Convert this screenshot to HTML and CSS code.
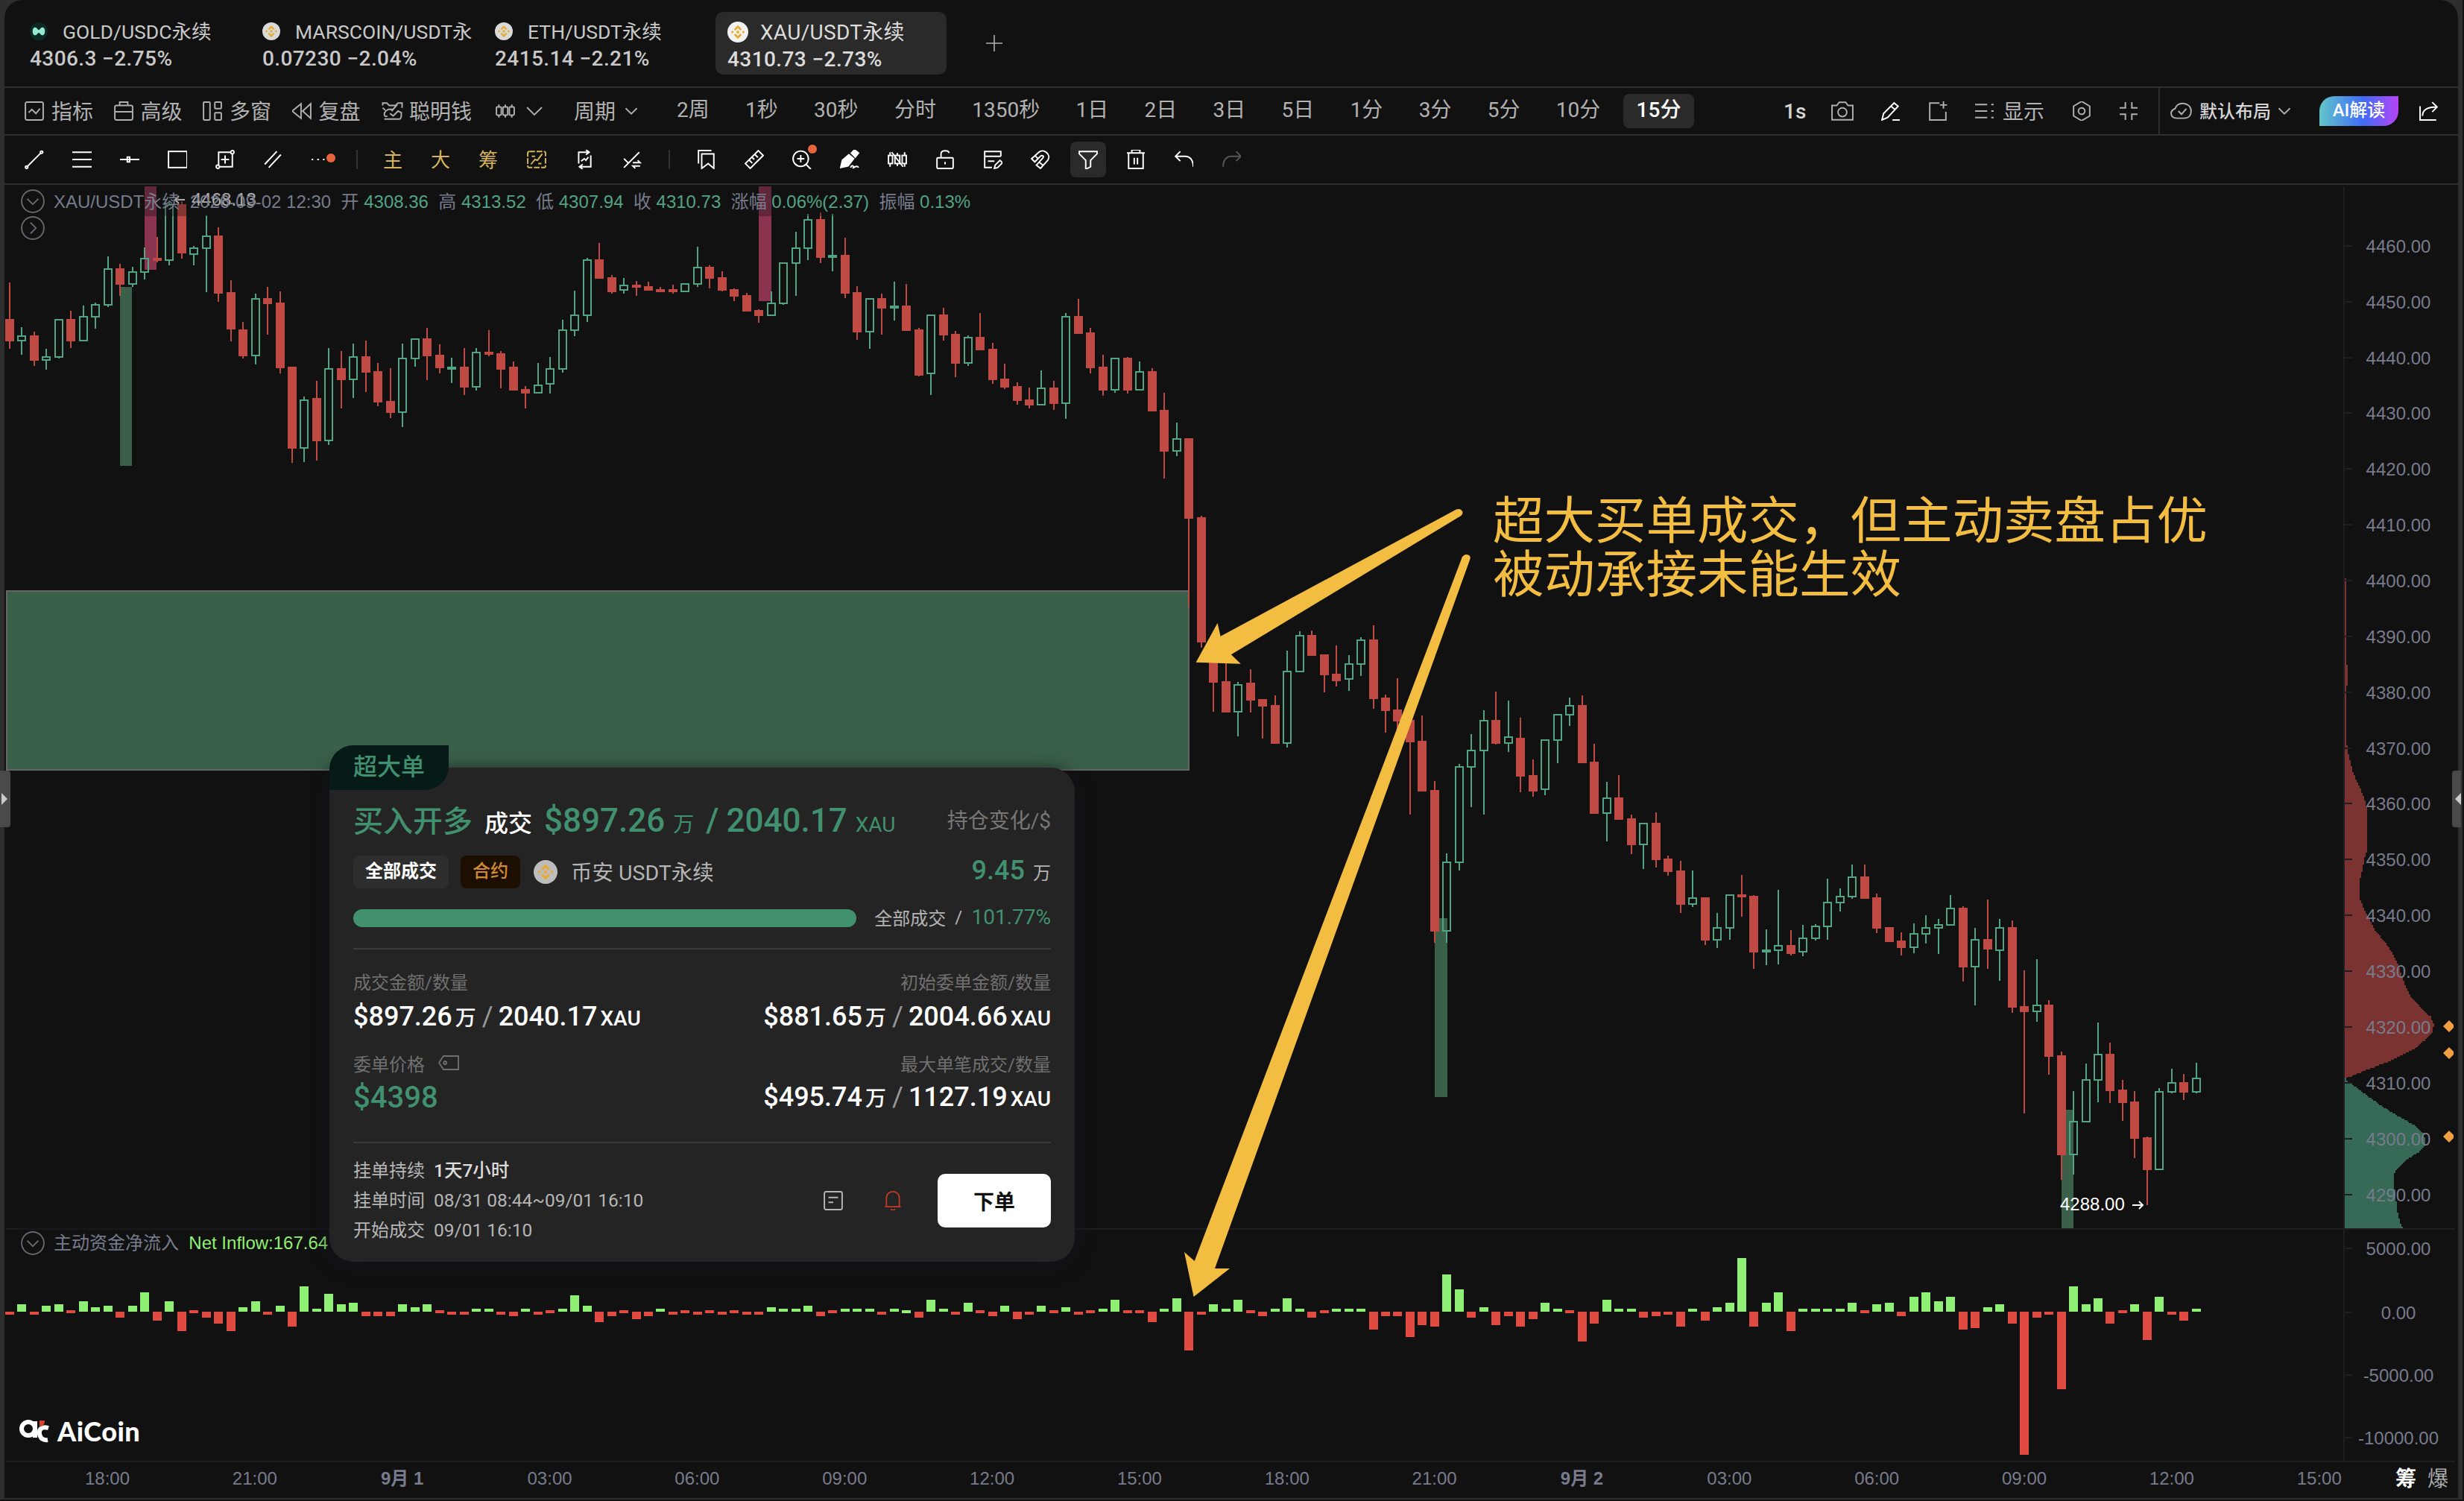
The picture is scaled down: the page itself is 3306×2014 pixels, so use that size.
FILE: index.html
```html
<!DOCTYPE html>
<html lang="zh-CN">
<head>
  <meta charset="UTF-8" />
  <title>XAU/USDT永续 - AiCoin</title>
  <link rel="stylesheet" href="styles.css">
</head>
<body>
  <!-- shared logos -->
  <svg class="defs" width="0" height="0">
    <symbol id="bnb" viewBox="0 0 32 32">
      <circle cx="16" cy="16" r="16" fill="currentColor" />
      <g fill="#e9ac33">
        <path d="M16 5.5l6 6-2.3 2.3L16 10.1l-3.7 3.7L10 11.5zM16 26.5l6-6-2.3-2.3-3.7 3.7-3.7-3.7L10 20.5zM16 13.2l2.8 2.8-2.8 2.8-2.8-2.8zM7.6 13.7L9.9 16l-2.3 2.3L5.3 16zM24.4 13.7l2.3 2.3-2.3 2.3-2.3-2.3z" />
      </g>
    </symbol>
    <symbol id="chev" viewBox="0 0 24 24"><path d="M2 7l10 10L22 7" /></symbol>
  </svg>

  <div class="window">
    <div class="app">
      <header class="tabs">
        <div class="tab">
          <div class="tab-name">
            <svg class="coin" viewBox="0 0 32 32"><circle cx="16" cy="16" r="16" fill="#0c2a24" /><path d="M5 16c0-5 2-7 4.500-7 3.500 0 4 4.500 6.500 4.500S19 9 22.500 9c2.500 0 4.500 2 4.500 7s-2 7-4.500 7c-3.500 0-4-4.500-6.500-4.500S13 23 9.500 23C7 23 5 21 5 16z" fill="#97e8d3" /></svg>
            <span>GOLD/USDC永续</span>
          </div>
          <div class="tab-price">4306.3 −2.75%</div>
        </div>
        <div class="tab">
          <div class="tab-name"><svg class="coin"><use href="#bnb" /></svg><span>MARSCOIN/USDT永</span></div>
          <div class="tab-price">0.07230 −2.04%</div>
        </div>
        <div class="tab">
          <div class="tab-name"><svg class="coin"><use href="#bnb" /></svg><span>ETH/USDT永续</span></div>
          <div class="tab-price">2415.14 −2.21%</div>
        </div>
        <div class="tab active">
          <div class="tab-name"><svg class="coin"><use href="#bnb" /></svg><span>XAU/USDT永续</span></div>
          <div class="tab-price">4310.73 −2.73%</div>
        </div>
        <svg class="add" viewBox="0 0 24 24"><path d="M12 1v22M1 12h22" /></svg>
      </header>

      <nav class="toolbar">
        <div class="tools">
          <span class="tool"><svg class="icon" viewBox="0 0 24 24"><rect x="1" y="1" width="22" height="22" rx="2" /><path d="M5 14l4-4 5 5 5-6" /></svg><b>指标</b></span>
          <span class="tool"><svg class="icon" viewBox="0 0 24 24"><rect x="1" y="5" width="22" height="18" rx="2" /><path d="M7 5V1h10v4M1 13h22" /></svg><b>高级</b></span>
          <span class="tool"><svg class="icon" viewBox="0 0 24 24"><rect x="1" y="1" width="8" height="22" rx="1" /><rect x="15" y="1" width="8" height="8" rx="1" /><rect x="15" y="14" width="8" height="9" rx="1" /></svg><b>多窗</b></span>
          <span class="tool"><svg class="icon" viewBox="0 0 24 24"><path d="M11 3v18L0 12zM23 3v18l-10-9z" /></svg><b>复盘</b></span>
          <span class="tool smart"><svg class="icon" viewBox="0 0 28 24"><path d="M2 5V2h5l3 3h8l3-3h5v6M2 8l3 3M8 18c-6 3-5-6 1-8h6M4 22h18c3 0 3-3 3-5v-3l-4-2-6 6-4-3M20 4l-7 8" /></svg><b>聪明钱</b></span>
          <span class="tool kline"><svg class="icon" viewBox="0 0 24 24"><path d="M4 4v3M4 17v3M12 4v3M12 17v3M20 4v3M20 17v3" /><rect x="1" y="7" width="6" height="10" rx="1" /><rect x="9" y="7" width="6" height="10" rx="1" /><rect x="17" y="7" width="6" height="10" rx="1" /></svg><svg class="icon chev"><use href="#chev" /></svg></span>
          <span class="tool cycle"><b>周期</b><svg class="icon chev small"><use href="#chev" /></svg></span>
        </div>
        <div class="periods">
          <span>2周</span><span>1秒</span><span>30秒</span><span>分时</span><span>1350秒</span><span>1日</span><span>2日</span><span>3日</span><span>5日</span><span>1分</span><span>3分</span><span>5分</span><span>10分</span><span class="active">15分</span>
        </div>
        <div class="actions">
          <span class="sec">1s</span>
          <svg class="icon cam" viewBox="0 0 28 24"><path d="M1 5h6l3-4h8l3 4h6v18H1z" /><circle cx="14" cy="13.500" r="5.500" /></svg>
          <svg class="icon white" viewBox="0 0 24 24"><path d="M1 23l2-8L16 2l5 4L8 20zM12 6l5 4M14 23h9" /></svg>
          <svg class="icon" viewBox="0 0 24 24"><path d="M14 2H2v21h20V13M19 0v9M14.500 4.500h9" /></svg>
          <span class="show"><svg class="icon" viewBox="0 0 24 24"><path d="M0 4h15M0 12h15M0 20h15M20 4h3M20 12h3M20 20h3" /></svg><b>显示</b></span>
          <svg class="icon" viewBox="0 0 24 24"><path d="M12 0l10 6v12l-10 6-10-6V6z" /><circle cx="12" cy="12" r="4" /></svg>
          <svg class="icon" viewBox="0 0 24 24"><path d="M8 1v7H1M16 1v7h7M8 23v-7H1M16 23v-7h7" /></svg>
        </div>
        <div class="layout">
          <svg class="icon cloud" viewBox="0 0 28 24"><path d="M8 21C3 21 1 18 1 15c0-3 2-5 5-6 1-4 5-7 10-6.500 6 .5 10 4 10 9.500 0 6-4 9-9 9zM10 12l4 4 6-7" /></svg>
          <b>默认布局</b>
          <svg class="icon chev small"><use href="#chev" /></svg>
          <span class="ai">AI解读</span>
          <svg class="icon white" viewBox="0 0 24 24"><path d="M1 6v17h20M4 18c0-7 5-11 18-11M16 1l6 6-6 6" /></svg>
        </div>
      </nav>

      <nav class="draw">
        <i><svg class="icon" viewBox="0 0 24 24"><path d="M3 21L20 4" /><circle cx="2.500" cy="21.500" r="1.500" /><circle cx="21" cy="3" r="1.500" /></svg></i>
        <i><svg class="icon" viewBox="0 0 24 24"><path d="M0 3h24M0 12h24M0 21h24" /></svg></i>
        <i><svg class="icon" viewBox="0 0 24 24"><path d="M0 12h24M9 9v6h3V9z" /></svg></i>
        <i><svg class="icon" viewBox="0 0 24 24"><rect x="1" y="2" width="23" height="20" /></svg></i>
        <i><svg class="icon" viewBox="0 0 24 24"><path d="M19 3H4v16M5 21h16V5M12 7v10M7 12h10" /><circle cx="21" cy="3" r="2" /><circle cx="3" cy="21" r="2" /></svg></i>
        <i><svg class="icon" viewBox="0 0 24 24"><path d="M2 18L17 2M7 22L22 6" /></svg></i>
        <i class="more"><svg class="icon" viewBox="0 0 24 24"><path d="M1 12h2M8 12h2M15 12h2" /></svg><b class="dot"></b></i>
        <hr>
        <i class="gold"><b>主</b></i>
        <i class="gold"><b>大</b></i>
        <i class="gold"><b>筹</b></i>
        <i class="gold"><svg class="icon" viewBox="0 0 24 24"><rect x="1" y="2" width="22" height="20" rx="2" stroke-dasharray="7 2" /><path d="M5 18l5-6 3 1 6-8M6 8h4M14 17h4" /></svg></i>
        <i><svg class="icon" viewBox="0 0 24 24"><path d="M5 17V3h13M14 0l4 3-4 3M20 7v14H6M10 24l-4-3 4-3M8 14l4-3 2 2 3-4" /></svg></i>
        <i><svg class="icon" viewBox="0 0 24 24"><path d="M2 22L21 3M2 11l6 6M13 16h9l-3-3M22 20h-9l3 3" /></svg></i>
        <hr class="wide">
        <i><svg class="icon" viewBox="0 0 24 24"><path d="M2 17V1h16M6 5h15v18l-7-6-8 6z" /></svg></i>
        <i><svg class="icon" viewBox="0 0 24 24"><path d="M1 17L17 1l6 6L7 23zM9 9l3 3M12.500 5.500l4 4M5.500 12.500l4 4" /></svg></i>
        <i class="more"><svg class="icon" viewBox="0 0 24 24"><circle cx="10.500" cy="11" r="9.500" /><path d="M17 18l6 6M6 11h9M10.500 6.500v9" /></svg><b class="dot up"></b></i>
        <i><svg class="icon" viewBox="0 0 24 24"><path d="M1 22l2-9 8-7 6 5-7 9zM14 4l4-4 5 4-4 5z" class="solid" /><path d="M13 22c2-4 5-2 3 1 3-3 6-3 7-1" /></svg></i>
        <i><svg class="icon" viewBox="0 0 24 24"><path d="M3 3v4M3 17v4M12 4v3M12 17v3M21 3v4M21 17v4M5 3l14 18" /><rect x="1" y="7" width="5" height="10" /><rect x="9" y="7" width="6" height="10" /><rect x="18" y="7" width="5" height="10" /></svg></i>
        <i><svg class="icon" viewBox="0 0 24 24"><rect x="2" y="10" width="20" height="13" rx="1" /><path d="M7 10V5c0-5 9-5 10-1M12 15v3" /></svg></i>
        <i><svg class="icon" viewBox="0 0 24 24"><path d="M22 8V2H2v20h9M2 8h20M6 14h8M14 23l1-4 6-6 3 3-6 6z" /></svg></i>
        <i><svg class="icon" viewBox="0 0 24 24"><path d="M1 11L10 3c6-5 16 3 11 10L12 23l-5-4 8-9c2-2-1-4-3-2l-7 7zM5 7l4 4M10 15l5 4" /></svg></i>
        <i class="on"><svg class="icon" viewBox="0 0 24 24"><path d="M1 2h22v3l-8 8v8l-6 3V13L1 5z" /></svg></i>
        <i><svg class="icon" viewBox="0 0 24 24"><path d="M1 4h22M3 4v19h18V4M7 4V0h10v4M10 10v8M14 10v8" /></svg></i>
        <i><svg class="icon" viewBox="0 0 24 24"><path d="M8 2L2 8l6 6M2 8h12c6 0 10 5 10 13" /></svg></i>
        <i class="off"><svg class="icon" viewBox="0 0 24 24"><path d="M18 2l6 6-6 6M24 8H12C6 8 2 13 2 21" /></svg></i>
      </nav>

      <main class="chart">
        <svg id="plot" viewBox="6 248 3292 1762" width="3292" height="1762"></svg>

        <div class="legend">
          <svg class="fold" viewBox="0 0 30 30"><circle cx="15" cy="15" r="14" /><path d="M8 12l7 7 7-7" /></svg>
          <div class="legend-text">XAU/USDT永续  2026-09-02 12:30  开 <b>4308.36</b>  高 <b>4313.52</b>  低 <b>4307.94</b>  收 <b>4310.73</b>  涨幅 <b>0.06%(2.37)</b>  振幅 <b>0.13%</b></div>
        </div>
        <svg class="fold fold-more" viewBox="0 0 30 30"><circle cx="15" cy="15" r="14" /><path d="M12 8l7 7-7 7" /></svg>

        <div class="legend flow">
          <svg class="fold" viewBox="0 0 30 30"><circle cx="15" cy="15" r="14" /><path d="M8 12l7 7 7-7" /></svg>
          <div class="legend-text">主动资金净流入  <b>Net Inflow:167.64</b></div>
        </div>

        <div class="brand">
          <svg viewBox="0 0 40 32"><g fill="none" stroke="#fff" stroke-width="6"><circle cx="12" cy="13" r="9" /><path d="M21 3v22" /><path d="M39 12c-10-3-13 3-12 8 1 6 5 9 11 8" /></g><path d="M27 2h7c0 5-2 8-7 8z" fill="#d8422c" /></svg>
          <span>AiCoin</span>
        </div>

        <div class="modes"><span class="on">筹</span><span>爆</span></div>
        <div class="note">超大买单成交，但主动卖盘占优<br>被动承接未能生效</div>

        <section class="card">
          <div class="badge">超大单</div>
          <div class="row head">
            <div class="deal"><span class="side">买入开多</span><span class="done">成交</span><span class="sum">$897.26</span><span class="unit">万</span><span class="sum sl">/</span><span class="sum">2040.17</span><span class="unit">XAU</span></div>
            <span class="dim28">持仓变化/$</span>
          </div>
          <div class="row meta">
            <div class="chips"><span class="chip">全部成交</span><span class="chip orange">合约</span><svg class="ex"><use href="#bnb" /></svg><span class="ex-name">币安 USDT永续</span></div>
            <div class="change">9.45<small>万</small></div>
          </div>
          <div class="row fill">
            <div class="track"></div>
            <span class="state">全部成交</span><span class="slash">/</span><span class="pct">101.77%</span>
          </div>
          <hr>
          <div class="row labels"><span>成交金额/数量</span><span>初始委单金额/数量</span></div>
          <div class="row values">
            <div>$897.26<small>万</small><em>/</em>2040.17<small>XAU</small></div>
            <div>$881.65<small>万</small><em>/</em>2004.66<small>XAU</small></div>
          </div>
          <div class="row labels second">
            <span class="price-label">委单价格<svg viewBox="0 0 28 20"><path d="M7 1h20v18H7L1 10z" /><circle cx="9" cy="10" r="2" /></svg></span>
            <span>最大单笔成交/数量</span>
          </div>
          <div class="row values">
            <div class="price">$4398</div>
            <div>$495.74<small>万</small><em>/</em>1127.19<small>XAU</small></div>
          </div>
          <hr class="bottom">
          <div class="row foot">
            <div class="times">
              <div><span>挂单持续</span><b>1天7小时</b></div>
              <div><span>挂单时间</span>08/31 08:44~09/01 16:10</div>
              <div><span>开始成交</span>09/01 16:10</div>
            </div>
            <div class="btns">
              <svg class="doc" viewBox="0 0 24 24"><rect x="1" y="1" width="22" height="22" rx="2" /><path d="M6 8h12M6 14h6" /></svg>
              <svg class="bell" viewBox="0 0 24 27"><path d="M1 22h22M3 22V10c0-12 18-12 18 0v12M9 25c1 2 5 2 6 0" /></svg>
              <button>下单</button>
            </div>
          </div>
        </section>
      </main>
    </div>
    <div class="handle left"></div>
    <div class="handle right"></div>
  </div>

  <script src="chart.js"></script>
</body>
</html>
```
FILE: styles.css
```css
* {
  box-sizing: border-box;
}

body {
  margin: 0;
  background: #111;
  color: #c8c8c8;
  font-family: Roboto, "Noto Sans CJK SC", sans-serif;
  font-size: 28px;
  overflow: hidden;
}

.defs {
  position: absolute;
}

.window {
  position: relative;
  width: 3304px;
  height: 2012px;
  padding: 0 6px 2px;
  background: #2e2e2e;
}

.app {
  height: 2010px;
  background: #111;
  border-radius: 24px 24px 0 0;
  overflow: hidden;
}

.icon {
  width: 26px;
  height: 26px;
  fill: none;
  stroke: #b0b0b0;
  stroke-width: 1.8;
  flex: none;
}

.icon.white {
  stroke: #fff;
}

.icon.chev {
  width: 24px;
  height: 24px;
}

.icon.chev.small {
  width: 18px;
  height: 18px;
  stroke-width: 2.4;
}

/* symbol tabs */
.tabs {
  display: flex;
  align-items: flex-start;
  gap: 2px;
  height: 118px;
  padding: 16px 18px;
  border-bottom: 2px solid #2e2e2e;
}

.tab {
  width: 310px;
  height: 84px;
  padding: 7px 16px;
  border-radius: 10px;
}

.tab.active {
  background: #2a2a2a;
  color: #dcdcdc;
  padding-top: 8px;
}

.tab.active .coin {
  width: 28px;
  height: 28px;
  color: #f2f2f2;
}

.tab-name {
  display: flex;
  align-items: center;
  gap: 20px;
  height: 38px;
  font-size: 26.5px;
  white-space: nowrap;
}

.tab-name span {
  padding-bottom: 4px;
}

.tab.active .tab-name {
  gap: 16px;
  font-size: 28px;
  letter-spacing: 0.3px;
}

.coin {
  width: 24px;
  height: 24px;
  color: #dadada;
  flex: none;
}

.tab-price {
  height: 34px;
  line-height: 36px;
  font-weight: 500;
  letter-spacing: 0.4px;
}

.add {
  width: 24px;
  height: 24px;
  margin: 30px 0 0 50px;
  stroke: #b0b0b0;
  stroke-width: 1.6;
}

/* main toolbar */
.toolbar {
  display: flex;
  align-items: center;
  height: 64px;
  border-bottom: 2px solid #2e2e2e;
  color: #b2b2b2;
}

.toolbar b {
  padding-bottom: 3px;
  font-weight: inherit;
}

.tools {
  display: flex;
  align-items: center;
  width: 884px;
  padding-left: 27px;
  gap: 27.500px;
}

.tool {
  display: flex;
  align-items: center;
  gap: 10px;
  height: 40px;
}

.tool.smart {
  gap: 7px;
}

.tool.smart .icon {
  width: 31px;
}

.tool.kline {
  gap: 13px;
  margin-left: 3px;
}

.tool.kline .icon:first-child {
  width: 28px;
}

.tool.cycle {
  margin-left: 14px;
  gap: 12px;
}

.periods {
  display: flex;
  gap: 12.300px;
}

.periods span {
  height: 46px;
  line-height: 44px;
  padding: 0 18px;
  border-radius: 8px;
  white-space: nowrap;
}

.periods .active {
  background: #2a2a2a;
  color: #fff;
  font-weight: 500;
}

.actions {
  display: flex;
  align-items: center;
  justify-content: space-between;
  width: 476px;
  margin-left: auto;
  color: #b2b2b2;
}

.actions .sec {
  color: #d5d5d5;
  font-weight: 500;
}

.icon.cam {
  width: 30px;
  margin-left: -3px;
}

.show {
  display: flex;
  align-items: center;
  gap: 11px;
}

.layout {
  display: flex;
  align-items: center;
  width: 402px;
  height: 62px;
  margin-left: 27px;
  padding-left: 14px;
  border-left: 2px solid #2e2e2e;
  font-size: 24px;
  font-weight: 500;
  color: #d5d5d5;
}

.icon.cloud {
  width: 30px;
  margin-right: 9px;
}

.layout .chev {
  margin-left: 9px;
}

.ai {
  width: 106px;
  height: 40px;
  line-height: 38px;
  margin: 0 28px 0 38px;
  border-radius: 20px 0 20px 0;
  background: linear-gradient(90deg, #62c6c9, #3f6cf6 55%, #b644f5);
  color: #fff;
  text-align: center;
}

/* drawing tools */
.draw {
  display: flex;
  align-items: center;
  gap: 16px;
  height: 66px;
  padding-left: 16px;
  border-bottom: 2px solid #2e2e2e;
}

.draw i {
  position: relative;
  display: flex;
  align-items: center;
  justify-content: center;
  width: 48px;
  height: 48px;
  border-radius: 8px;
  font-style: normal;
}

.draw .icon {
  stroke: #fff;
}

.draw .solid {
  fill: #fff;
}

.draw .gold {
  color: #d6b45c;
  font-size: 26px;
}

.gold b {
  padding: 0 2px 4px 0;
  font-weight: 400;
}

.draw .gold .icon {
  stroke: #d6b45c;
}

.draw .on {
  background: #2a2a2a;
}

.draw .off .icon {
  stroke: #555;
}

.draw hr {
  width: 2px;
  height: 26px;
  margin: 0 8px;
  border: 0;
  background: #333;
}

.draw hr.wide {
  margin: 0 9px;
}

.dot {
  position: absolute;
  right: 4px;
  top: 16px;
  width: 12px;
  height: 12px;
  border-radius: 50%;
  background: #e8643c;
}

.dot.up {
  top: 4px;
  fill: initial;
}

/* chart */
.chart {
  position: relative;
  height: 1762px;
}

#plot {
  display: block;
  font-family: "Liberation Sans", "Noto Sans CJK SC", sans-serif;
  font-size: 24px;
}

.axis {
  fill: #777b8c;
}

#plot .rise {
  fill: none;
  stroke: #52a384;
  stroke-width: 2;
}

#plot .fall {
  fill: #be4a43;
  stroke: #be4a43;
  stroke-width: 2;
}

.legend {
  position: absolute;
  left: 20px;
  top: 2px;
  display: flex;
  align-items: center;
  gap: 10px;
  height: 40px;
  padding-left: 2px;
  background: rgba(17, 17, 17, 0.35);
  font-family: "Liberation Sans", "Noto Sans CJK SC", sans-serif;
  font-size: 24px;
  color: #777b8c;
}

.legend-text {
  white-space: pre;
  padding: 0 0 4px 2px;
}

.legend b {
  font-weight: 400;
  color: #52a384;
}

.legend.flow {
  top: 1400px;
}

.legend.flow .legend-text {
  padding-bottom: 5px;
}

.legend.flow b {
  color: #8ff075;
}

.fold {
  width: 32px;
  height: 32px;
  fill: none;
  stroke: #66666e;
  stroke-width: 1.8;
}

.fold-more {
  position: absolute;
  left: 22px;
  top: 42px;
}

.brand {
  position: absolute;
  left: 20px;
  top: 1650px;
  display: flex;
  align-items: center;
  gap: 11px;
  color: #fff;
  font-family: Lato, sans-serif;
  font-size: 36px;
  font-weight: 900;
  letter-spacing: 0.5px;
}

.brand svg {
  width: 40px;
  height: 32px;
}

.modes {
  position: absolute;
  right: 13px;
  bottom: 8px;
  display: flex;
  gap: 15px;
  color: #aaa;
}

.modes .on {
  color: #fff;
  font-weight: 700;
}

.note {
  position: absolute;
  left: 1997px;
  top: 416px;
  font-size: 68.500px;
  line-height: 72px;
  color: #f3bd42;
  white-space: nowrap;
}

/* order card */
.card {
  position: absolute;
  left: 436px;
  top: 782px;
  width: 1000px;
  height: 663px;
  padding: 41px 32px 0;
  border-radius: 0 32px 32px 32px;
  background: #242424;
  box-shadow: 0 4px 24px rgba(18, 20, 30, 0.9);
  color: #b5b5b5;
}

.badge {
  position: absolute;
  left: 0;
  top: -30px;
  width: 160px;
  height: 60px;
  padding-left: 32px;
  line-height: 58px;
  border-radius: 32px 0 32px 0;
  background: #061a17;
  color: #41906f;
  font-size: 32px;
  font-weight: 500;
}

.card .row {
  display: flex;
  align-items: center;
  justify-content: space-between;
  white-space: nowrap;
}

.card hr {
  height: 2px;
  margin: 20px 0 26px;
  border: 0;
  background: #3a3a3a;
}

.head {
  height: 56px;
}

.deal {
  display: flex;
  align-items: baseline;
  color: #41906f;
}

.side {
  font-size: 40px;
  font-weight: 500;
}

.done {
  margin: 0 16px;
  color: #fff;
  font-size: 32px;
  font-weight: 500;
}

.sum {
  font-size: 44px;
  font-weight: 500;
}

.sum.sl {
  margin: 0 10px 0 16px;
}

.unit {
  margin-left: 11px;
}

.dim28 {
  color: #777;
}

.meta {
  height: 44px;
  margin-top: 21px;
}

.chips {
  display: flex;
  align-items: center;
  gap: 16px;
}

.chip {
  height: 44px;
  line-height: 42px;
  padding: 0 16px;
  border-radius: 8px;
  background: #2d2d2d;
  color: #fff;
  font-size: 24px;
  font-weight: 700;
}

.chip.orange {
  background: #1c0e00;
  color: #d08a32;
  font-weight: 500;
}

.ex {
  width: 32px;
  height: 32px;
  margin: 0 2px;
  color: #bdbdbd;
}

.ex-name {
  padding-bottom: 4px;
  font-size: 28.500px;
}

.change {
  padding-bottom: 4px;
  color: #41906f;
  font-size: 36px;
  font-weight: 500;
}

.change small {
  margin-left: 11px;
  color: #b5b5b5;
  font-size: 24px;
  font-weight: 400;
}

.card .fill {
  height: 40px;
  margin-top: 20px;
  font-size: 24px;
}

.state,
.slash,
.pct {
  padding-bottom: 3px;
}

.track {
  width: 675px;
  height: 24px;
  border-radius: 12px;
  background: #41916f;
}

.slash {
  margin: 0 -12px;
}

.pct {
  color: #41906f;
  font-size: 28px;
}

.labels {
  height: 32px;
  color: #707070;
  font-size: 24px;
}

.labels.second {
  margin-top: 24px;
}

.price-label {
  display: flex;
  align-items: center;
  gap: 18px;
}

.price-label svg {
  width: 28px;
  height: 20px;
  fill: none;
  stroke: #707070;
  stroke-width: 1.8;
}

.values {
  height: 44px;
  margin-top: 10px;
  color: #fff;
  font-size: 36px;
  font-weight: 500;
}

.labels.second + .values {
  margin-top: 8px;
}

.values small {
  margin-left: 4px;
  font-size: 28px;
}

.values em {
  margin: 0 7px 0 8px;
  color: #999;
  font-style: normal;
  font-weight: 400;
}

.values .price {
  color: #41906f;
  font-size: 40px;
}

.card hr.bottom {
  margin: 38px 0 17px;
}

.times {
  font-size: 24.500px;
  line-height: 40px;
}

.times span {
  margin-right: 12px;
  font-size: 24px;
}

.times b {
  color: #dcdcdc;
  font-weight: 500;
}

.btns {
  display: flex;
  align-items: center;
}

.btns svg {
  width: 26px;
  height: 26px;
  fill: none;
  stroke: #b5b5b5;
  stroke-width: 1.8;
}

.btns .bell {
  margin: 0 47px 0 54px;
  stroke: #c0392b;
}

.btns button {
  width: 152px;
  height: 72px;
  border: 0;
  border-radius: 10px;
  background: #fff;
  color: #111;
  font-family: inherit;
  font-size: 28px;
  font-weight: 700;
}

/* side panel handles */
.handle {
  position: absolute;
  top: 1034px;
  width: 14px;
  height: 76px;
  background: #4a4a4a;
}

.handle::after {
  content: "";
  position: absolute;
  top: 30px;
  left: 2px;
  border: 8px solid transparent;
  border-right: 0;
  border-left-color: #ccc;
}

.handle.left {
  left: 0;
  border-radius: 0 4px 4px 0;
}

.handle.right {
  right: 2px;
  width: 12px;
  border-radius: 4px 0 0 4px;
}

.handle.right::after {
  left: 4px;
  border: 8px solid transparent;
  border-left: 0;
  border-right-color: #ccc;
}
```
FILE: chart.js
```js
const plot = document.getElementById('plot');
const STEP = 16.483;
const X0 = 12.9;
const ZERO = 1760;

// direction, high, body top, body bottom, low
const candles = `
d379,428,458,468 u439,450,458,476 d445,450,484,491 u468,478,484,496 u428,428,480,481 d417,428,458,467
u410,424,458,458 u406,408,426,441 u344,360,410,412 d354,360,382,397 u358,364,382,385 u332,346,366,375
d318,346,350,352 u269,274,350,356 d270,274,340,347 u330,332,342,356 u289,316,334,392 d305,316,394,405
d376,392,442,458 d432,442,478,481 u394,400,478,489 d385,400,408,449 d391,406,494,501 d492,492,602,621
u532,536,602,620 d511,534,592,618 u467,494,592,597 d471,494,510,548 u461,478,510,534 d457,478,500,526
d487,498,540,545 d494,538,554,561 u461,480,554,573 u454,454,482,492 d440,454,478,510 d462,476,494,501
u480,492,496,514 d467,492,520,530 u467,472,520,524 d443,472,476,478 d471,474,496,521 d485,492,524,524
d518,522,528,548 u487,516,528,528 u479,494,516,528 u429,442,496,500 u390,422,444,451 u346,348,424,432
d326,348,374,374 d369,372,392,394 u373,382,390,394 d377,382,386,397 d378,384,390,390 d385,388,392,392
d382,388,392,394 u380,380,392,392 u331,358,382,385 d356,358,374,387 d364,372,390,391 d387,388,398,404
d393,396,418,418 d415,416,424,433 u391,406,424,424 u352,352,408,409 u311,332,354,397 u287,294,334,349
d285,294,346,353 u287,342,346,364 d319,342,394,400 d384,392,446,456 u400,400,446,468 d394,400,414,449
u378,410,414,430 d381,410,444,444 d440,442,504,505 u422,422,502,530 d413,422,450,457 d444,448,488,506
u450,452,488,491 d420,452,470,470 d460,468,510,515 d488,508,520,522 d513,518,538,543 d520,536,544,548
u497,520,544,544 d511,520,542,550 u420,424,542,562 d401,424,448,448 d440,446,494,501 d476,492,524,531
u480,480,524,527 d479,480,524,528 u485,498,524,524 d494,498,552,552 d527,550,606,642 u567,588,606,612
d588,588,696,813 d692,694,862,869 d860,862,916,955 d880,914,956,956 u915,918,956,988 d898,916,940,956
d938,938,948,991 d933,946,998,998 u873,900,998,1003 u847,852,902,902 d846,852,880,880 d878,878,906,929
d866,904,914,921 u879,890,912,927 u855,858,892,907 d839,858,938,951 d932,936,954,983 d910,952,968,990
d960,966,996,1093 d960,994,1062,1062 d1048,1060,1250,1265 u1145,1156,1250,1265 u1025,1028,1158,1168 u985,1006,1030,1083
u953,966,1008,1093 d928,966,998,999 u940,988,998,1009 d963,990,1042,1063 d1019,1040,1062,1069 u992,992,1060,1067
u958,958,994,1024 u936,946,960,974 d933,946,1024,1024 d998,1022,1092,1092 u1049,1070,1092,1129 d1040,1070,1100,1100
d1093,1098,1134,1146 u1104,1104,1134,1166 d1090,1104,1154,1164 d1148,1152,1170,1175 d1155,1168,1214,1225 u1168,1204,1214,1217
d1204,1204,1262,1268 u1225,1244,1262,1272 u1200,1200,1246,1261 d1174,1200,1204,1230 d1201,1202,1278,1300 u1247,1274,1278,1295
u1194,1268,1276,1294 d1248,1268,1280,1282 u1241,1258,1278,1283 u1240,1242,1260,1262 u1179,1210,1244,1261 u1192,1202,1212,1223
u1160,1176,1204,1206 d1160,1176,1206,1206 d1199,1204,1246,1252 d1244,1244,1264,1264 d1251,1262,1272,1282 u1239,1252,1272,1279
u1228,1244,1254,1266 u1233,1240,1246,1280 u1201,1218,1242,1242 d1216,1218,1298,1317 u1245,1260,1298,1349 d1207,1260,1274,1300
u1233,1244,1276,1316 d1235,1244,1352,1359 d1302,1350,1358,1494 u1287,1348,1358,1371 d1342,1348,1418,1442 d1411,1416,1550,1583
u1464,1504,1550,1576 u1427,1448,1506,1506 u1372,1414,1450,1479 d1399,1414,1464,1480 d1449,1462,1480,1504 d1464,1478,1528,1554
d1525,1526,1570,1617 u1460,1464,1570,1570 u1434,1452,1466,1467 d1441,1452,1466,1476 u1426,1446,1466,1467`.trim().split(/\s+/);

const flow = [
  -4, 10, -4, 8, 10, -2, 14, 6, 8, -8, 8, 26, -12, 14, -26, -2, -8, -16, -26, 6,
  14, -4, 8, -20, 34, 4, 24, 10, 12, -6, -6, -6, 10, 6, 10, -2, -4, -4, 4, 4,
  -4, -6, 4, -4, -2, 4, 22, 8, -14, -6, -2, -10, -6, 4, -4, -2, -4, -2, -4, -2,
  -4, -4, 6, 4, 4, 8, -6, -2, 4, 4, 4, -4, 4, 2, -8, 16, 4, -4, 12, -2,
  -6, 8, -10, -4, 8, -2, 6, -4, -2, 4, 16, -2, -2, -14, 4, 18, -52, -4, 10, 4,
  16, -2, -6, 4, 18, 4, -8, -2, 4, 4, 4, -24, -6, -6, -34, -18, -20, 50, 30, -8,
  6, -18, -6, -20, -10, 12, 4, -2, -40, -16, 16, 4, 4, -8, -6, -4, -20, 4, -12, 6,
  12, 72, -20, 12, 26, -26, 4, 4, 4, 4, 12, -2, 10, 12, -6, 20, 26, 14, 20, -24,
  -22, 6, 10, -16, -192, -8, -4, -104, 34, 10, 18, -16, -2, 10, -38, 20, -4, -12, 4
];

// volume profile: [y, width]
const profileRed = [[776, 2], [891, 2], [892, 4], [919, 4], [920, 2], [1000, 3], [1016, 6], [1032, 10], [1048, 16], [1060, 22], [1070, 26], [1086, 30], [1142, 30],
  [1144, 28], [1164, 24], [1180, 20], [1204, 20], [1214, 24], [1227, 30], [1249, 42], [1263, 54], [1281, 66], [1295, 72], [1316, 79], [1334, 87], [1349, 100],
  [1363, 115], [1374, 120], [1384, 117], [1395, 107], [1406, 94], [1416, 74], [1424, 57], [1431, 39], [1438, 21], [1443, 9], [1446, 1]];
const profileGreen = [[1446, 1], [1452, 4], [1454, 10], [1463, 22], [1477, 41], [1488, 57], [1499, 76], [1509, 94], [1520, 105], [1527, 108], [1536, 107],
  [1545, 99], [1556, 82], [1566, 71], [1575, 66], [1588, 66], [1602, 68], [1627, 71], [1638, 74], [1648, 78]];

function rect(x, y, w, h, attrs) {
  return `<rect x="${x}" y="${y}" width="${w}" height="${h}" ${attrs}/>`;
}

function text(x, y, s, attrs) {
  return `<text x="${x}" y="${y}" ${attrs}>${s}</text>`;
}

function profile(points, color) {
  let out = '';
  for (let i = 1; i < points.length; i++) {
    const [y1, w1] = points[i - 1];
    const [y2, w2] = points[i];
    for (let y = y1; y < y2; y += 2) {
      const w = w1 + (w2 - w1) * (y - y1) / (y2 - y1);
      out += rect(3146, y, Math.max(2, Math.round(w / 2) * 2), Math.min(2, y2 - y), `fill="${color}" shape-rendering="crispEdges"`);
    }
  }
  return out;
}

let html = '';

// pane borders
html += rect(8, 1648, 3286, 2, 'fill="#1d1d22"');
html += rect(8, 1960, 3286, 2, 'fill="#1d1d22"');
html += rect(3144, 250, 2, 1710, 'fill="#1d1d22"');

// big order zones
html += rect(194, 250, 16, 112, 'fill="#8b3450"');
html += rect(1018, 250, 17, 154, 'fill="#8b3450"');
html += rect(161, 385, 16, 240, 'fill="#3a6049"');
html += rect(9, 793, 1586, 240, 'fill="#3a6049" stroke="#666" stroke-width="2"');
html += rect(1925, 1232, 17, 240, 'fill="#3a6049"');
html += rect(2766, 1489, 16, 159, 'fill="#3a6049"');

candles.forEach((c, i) => {
  const cls = c[0] === 'u' ? 'rise' : 'fall';
  const [hi, top, bot, lo] = c.slice(1).split(',').map(Number);
  const x = Math.round(X0 + i * STEP);
  let wick = '';
  if (hi < top) wick += `M${x} ${hi}V${top + 1}`;
  if (lo > bot) wick += `M${x} ${bot - 1}V${lo}`;
  html += `<g class="${cls}">${rect(x - 5, top + 1, 10, bot - top - 2, '')}<path d="${wick}"/></g>`;
});

flow.forEach((v, i) => {
  const x = Math.round(X0 + i * STEP) - 6;
  const color = v > 0 ? '#8ff075' : '#df4a41';
  if (Math.abs(v) <= 2) html += rect(x, ZERO - 2, 12, 4, `fill="${color}"`);
  else html += rect(x, v > 0 ? ZERO - v : ZERO, 12, Math.abs(v), `fill="${color}"`);
});

html += profile(profileRed, '#7a3330') + profile(profileGreen, '#366956');

// price axis
for (let p = 4460; p >= 4290; p -= 10) {
  const y = 779 + (4400 - p) * 7.487;
  html += rect(3146, Math.round(y) - 1, 10, 2, 'fill="#1d1d22"');
  html += text(3218, y + 9, p + '.00', 'class="axis" text-anchor="middle"');
}
[[1675, '5000.00'], [1761, '0.00'], [1845, '-5000.00'], [1929, '-10000.00']].forEach(([y, s]) => {
  html += rect(3146, y - 1, 10, 2, 'fill="#1d1d22"');
  html += text(3218, y + 9, s, 'class="axis" text-anchor="middle"');
});

// time axis
['18:00', '21:00', '9月 1', '03:00', '06:00', '09:00', '12:00', '15:00', '18:00', '21:00', '9月 2', '03:00', '06:00', '09:00', '12:00', '15:00'].forEach((s, i) => {
  html += text(144 + i * 197.85, 1992, s, `class="axis" text-anchor="middle" ${s.includes('月') ? 'font-weight="700"' : ''}`);
});

// high / low marks
html += '<path d="M248 268h-13m5 -5l-5 5l5 5" fill="none" stroke="#fff" stroke-width="2"/>';
html += text(257, 276, '4468.13', 'fill="#fff"');
html += text(2764, 1624, '4288.00', 'fill="#fff"');
html += '<path d="M2861 1617h14m-5 -5l5 5l-5 5" fill="none" stroke="#fff" stroke-width="2"/>';

[1377, 1413, 1525].forEach(y => {
  html += `<path d="M3278 ${y}l8 -8l6 6v4l-6 6z" fill="#f0a040"/>`;
});

// annotation arrows
html += '<g fill="#f3bd42">';
html += '<path d="M1604.600 888.700L1633.600 836L1637.600 853.700L1954 683.500Q1960 681.500 1962.500 687Q1962.500 690.500 1959.500 692.500L1651.900 878.300L1664.800 890.700Z"/>';
html += '<path d="M1601.600 1740L1589 1680L1602.700 1692L1962 747Q1966 742 1971 745Q1973.500 747 1972.500 750L1630 1702L1650 1702Z"/>';
html += '</g>';

plot.innerHTML = html;
```
